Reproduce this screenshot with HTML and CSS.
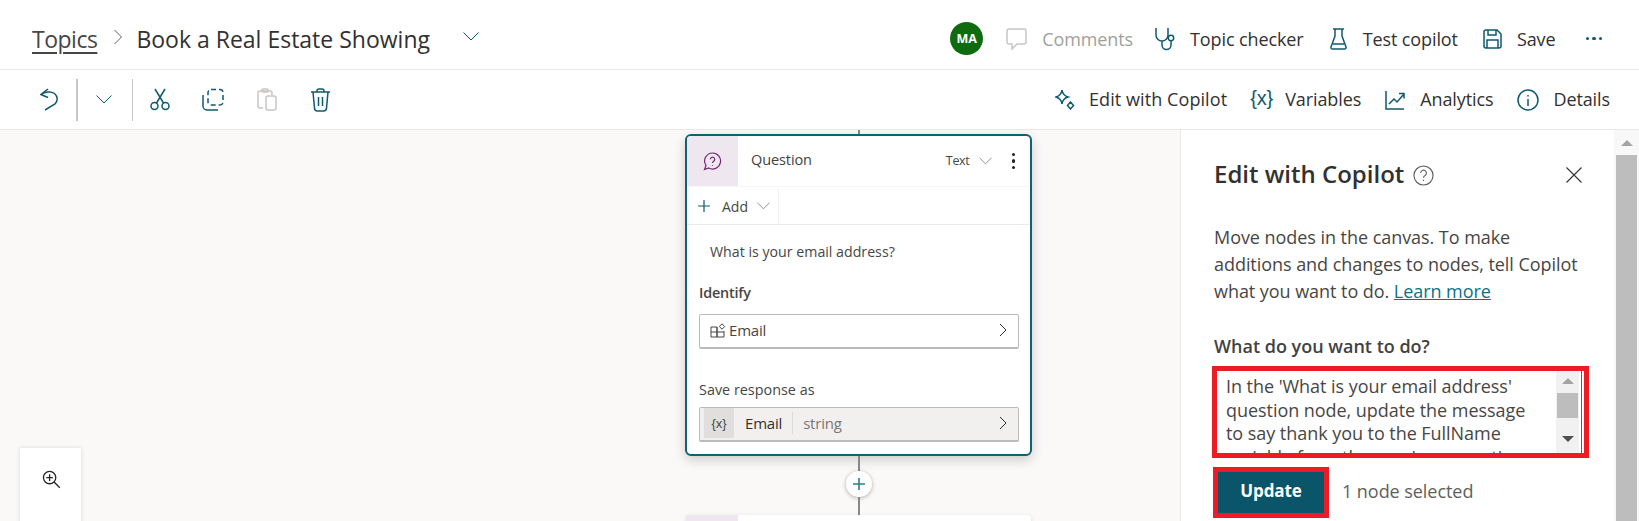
FILE: index.html
```html
<!DOCTYPE html>
<html lang="en">
<head>
<meta charset="utf-8">
<title>Book a Real Estate Showing</title>
<link rel="stylesheet" href="styles.css">
</head>
<body>
<header class="topbar">
  <nav class="crumbs">
    <a class="crumb-link">Topics</a>
    <svg class="crumb-sep" viewBox="0 0 10 16"><path d="M1.5 1l7 7-7 7"/></svg>
    <span class="crumb-title">Book a Real Estate Showing</span>
    <svg class="crumb-chev" viewBox="0 0 16 9"><path d="M.5.5L8 8 15.500.500"/></svg>
  </nav>
  <div class="actions">
    <span class="avatar">MA</span>
    <button class="act act-comments">
      <svg class="ico ico-off" width="21" height="22" viewBox="0 0 21 22"><path d="M3 1h15a2 2 0 0 1 2 2v11a2 2 0 0 1-2 2h-7l-5 5v-5H3a2 2 0 0 1-2-2V3a2 2 0 0 1 2-2z"/></svg>
      <span>Comments</span>
    </button>
    <button class="act act-check">
      <svg class="ico" width="22" height="24" viewBox="0 0 22 24"><path d="M1 1v7a6 6 0 0 0 12 0V1M7 14v4a4.500 4.500 0 0 0 9 0v-4"/><circle cx="16" cy="11" r="2.700"/></svg>
      <span>Topic checker</span>
    </button>
    <button class="act act-test">
      <svg class="ico" width="17" height="22" viewBox="0 0 17 22"><path d="M3 1h11M5 1v7L1 19a1.500 1.500 0 0 0 1.500 2h12a1.500 1.500 0 0 0 1.500-2L12 8V1M3 16h11"/></svg>
      <span>Test copilot</span>
    </button>
    <button class="act act-save">
      <svg class="ico" width="19" height="20" viewBox="0 0 19 20"><path d="M1 3a2 2 0 0 1 2-2h11l4 4v12a2 2 0 0 1-2 2H3a2 2 0 0 1-2-2zM5 1v5h8V1M4 19v-8h11v8"/></svg>
      <span>Save</span>
    </button>
    <span class="more"><i></i><i></i><i></i></span>
  </div>
</header>

<div class="toolbar">
  <div class="tools">
    <svg class="ico tool-undo" width="19" height="23" viewBox="0 0 19 23"><path d="M8 1L1 6.500l7 3M1 6.500C5 3.500 11 3 14.500 5.500c3.500 3 3.500 7.500.5 10.500L5 22"/></svg>
    <span class="vsep vsep-thick"></span>
    <svg class="ico tool-chev" width="16" height="9" viewBox="0 0 16 9"><path d="M.5.500L8 8 15.500.500"/></svg>
    <span class="vsep"></span>
    <svg class="ico tool-cut" width="20" height="23" viewBox="0 0 20 23"><circle cx="4.500" cy="18" r="3.500"/><circle cx="15.500" cy="18" r="3.500"/><path d="M6.500 15L15 1M13.500 15L5 1"/></svg>
    <svg class="ico tool-copy" width="22" height="23" viewBox="0 0 22 23"><path d="M1 7v11a4 4 0 0 0 4 4h11"/><rect x="6" y="1.500" width="15" height="15.500" rx="3" stroke-dasharray="5 3"/></svg>
    <svg class="ico ico-off tool-paste" width="20" height="23" viewBox="0 0 20 23"><path d="M6 20H3a2 2 0 0 1-2-2V5a2 2 0 0 1 2-2h10a2 2 0 0 1 2 2v2"/><rect x="5" y="1" width="6" height="3" rx="1"/><rect x="9" y="8" width="10" height="14" rx="2"/></svg>
    <svg class="ico tool-trash" width="21" height="24" viewBox="0 0 21 24"><path d="M1 4h19M7 4V3a2 2 0 0 1 2-2h3a2 2 0 0 1 2 2v1M3 4l1.500 16a3 3 0 0 0 3 3h6a3 3 0 0 0 3-3L18 4M8.500 9v9M12.500 9v9"/></svg>
  </div>
  <div class="tool-actions">
    <button class="act act-edit">
      <svg class="ico" width="20" height="21" viewBox="0 0 20 21"><path d="M7 1c.5 3.500 2.500 6 6 7-3.500 1-5.500 3.500-6 7-.5-3.500-2.500-6-6-7 3.500-1 5.500-3.500 6-7zM15.500 13l3 3.500-3 3.500-3-3.500z"/></svg>
      <span>Edit with Copilot</span>
    </button>
    <button class="act act-vars">
      <span class="brace">{x}</span>
      <span>Variables</span>
    </button>
    <button class="act act-analytics">
      <svg class="ico" width="20" height="20" viewBox="0 0 20 20"><path d="M1 1v18h18M4 14l5-5 3 3 7-8M14 3.500h5v5"/></svg>
      <span>Analytics</span>
    </button>
    <button class="act act-details">
      <svg class="ico" width="22" height="22" viewBox="0 0 22 22"><circle cx="11" cy="11" r="10"/><path d="M11 10v7M11 6v1.500"/></svg>
      <span>Details</span>
    </button>
  </div>
</div>

<main class="workspace">
  <section class="canvas">
    <div class="flow">
      <span class="link link-top"></span>
      <article class="node">
        <div class="node-head">
          <span class="node-icon">
            <svg width="19" height="19" viewBox="0 0 19 19"><path d="M9.500 1a8 8 0 1 1-3.800 15L1.500 17.500 3 13.500A8 8 0 0 1 9.500 1z"/><path d="M7.300 7.200a2.200 2.200 0 1 1 3.400 2c-.8.500-1.200.9-1.200 1.800M9.500 13v.8"/></svg>
          </span>
          <span class="node-name">Question</span>
          <span class="node-type">Text</span>
          <svg class="chev-sm" viewBox="0 0 14 8"><path d="M.5.500L7 7 13.500.500"/></svg>
          <span class="kebab"><i></i><i></i><i></i></span>
        </div>
        <div class="node-add">
          <div class="add-btn">
            <svg class="plus-sm" viewBox="0 0 12 12"><path d="M6 0v12M0 6h12"/></svg>
            <span>Add</span>
            <svg class="chev-sm" viewBox="0 0 14 8"><path d="M.5.500L7 7 13.500.500"/></svg>
          </div>
        </div>
        <p class="node-msg">What is your email address?</p>
        <div class="node-label label-identify">Identify</div>
        <div class="picker">
          <svg class="entity" viewBox="0 0 16 15"><path d="M1 4h6v10H1zM1 9h13M7 4v10h7V8"/><path d="M12 .8l2.700 2.700-2.700 2.700-2.700-2.700z"/></svg>
          <span>Email</span>
          <svg class="chev-r" viewBox="0 0 8 14"><path d="M1 1l6 6-6 6"/></svg>
        </div>
        <div class="node-label label-save">Save response as</div>
        <div class="picker picker-var">
          <span class="var-tag">{x}</span>
          <span class="var-name">Email</span>
          <span class="var-type">string</span>
          <svg class="chev-r" viewBox="0 0 8 14"><path d="M1 1l6 6-6 6"/></svg>
        </div>
      </article>
      <span class="link link-mid"></span>
      <button class="add-node"><svg viewBox="0 0 12 12"><path d="M6 0v12M0 6h12"/></svg></button>
      <span class="link link-low"></span>
      <div class="node-next"><span class="node-next-icon"></span></div>
    </div>
    <div class="zoom-box">
      <svg width="19" height="19" viewBox="0 0 20 20"><circle cx="8" cy="8" r="6.500"/><path d="M8 4.500v7M4.500 8h7M12.700 12.700l6 6"/></svg>
    </div>
  </section>

  <aside class="panel">
    <div class="panel-head">
      <h2>Edit with Copilot</h2>
      <svg class="help" viewBox="0 0 22 22"><circle cx="11" cy="11" r="10"/><path d="M8 8.500a3 3 0 1 1 4.600 2.500c-1 .6-1.600 1.200-1.600 2.300M11 15.500v1.200"/></svg>
      <svg class="close" viewBox="0 0 16 16"><path d="M.5.500l15 15M15.500.500l-15 15"/></svg>
    </div>
    <p class="panel-text">Move nodes in the canvas. To make<br>additions and changes to nodes, tell Copilot<br>what you want to do. <a class="learn">Learn more</a></p>
    <div class="prompt-label">What do you want to do?</div>
    <div class="prompt">
      <div class="prompt-text">In the 'What is your email address'<br>question node, update the message<br>to say thank you to the FullName<br>variable from the previous question</div>
      <div class="mini-scroll">
        <span class="arrow-up"></span>
        <span class="mini-thumb"></span>
        <span class="arrow-down"></span>
      </div>
    </div>
    <div class="submit-row">
      <div class="submit-outline"><button class="submit">Update</button></div>
      <span class="selected">1 node selected</span>
    </div>
  </aside>

  <div class="page-scroll">
    <span class="page-arrow"></span>
    <span class="page-thumb"></span>
  </div>
</main>
</body>
</html>
```

FILE: styles.css
```css
* { box-sizing: border-box; }
html, body { margin: 0; height: 521px; overflow: hidden; }
body { font-family: "Open Sans", "Noto Sans", "Liberation Sans", sans-serif; color: #323130; background: #fff; }
button { font: inherit; color: inherit; border: 0; background: none; padding: 0; }
p, h2 { margin: 0; }
svg { display: block; flex: none; fill: none; }

.ico { stroke: #0f5a6e; stroke-width: 1.500; }
.ico-off { stroke: #c8c6c4; }

.topbar { height: 70px; display: flex; align-items: center; border-bottom: 1px solid #e9e8e7; padding: 8px 37px 0 32px; }
.crumbs { display: flex; align-items: center; }
.crumb-link { font-size: 23px; letter-spacing: -.5px; text-decoration: underline; text-underline-offset: 4px; text-decoration-thickness: 1.500px; color: #484644; }
.crumb-sep { width: 10px; height: 16px; margin: -4px 0 0 16px; }
.crumb-sep path { stroke: #605e5c; stroke-width: 1; }
.crumb-title { font-size: 23px; margin-left: 13px; }
.crumb-chev { width: 16px; height: 9px; margin: -4px 0 0 33px; }
.crumb-chev path { stroke: #0f5a6e; stroke-width: 1; }

.actions, .tool-actions { margin-left: auto; display: flex; align-items: center; }
.act { display: flex; align-items: center; font-size: 18px; letter-spacing: -.1px; white-space: nowrap; }
.tool-actions .act span { margin-top: -2px; }
.avatar { width: 33px; height: 33px; border-radius: 50%; background: #0f6b0f; color: #fff; font-size: 12.500px; font-weight: 700; display: flex; align-items: center; justify-content: center; margin-right: 23px; }
.act-comments { gap: 15px; color: #a19f9d; margin-right: 22px; }
.act-check { gap: 13px; margin-right: 26px; }
.act-test { gap: 16px; margin-right: 25px; }
.act-save { gap: 15px; margin-right: 30px; }
.more { display: flex; gap: 3px; }
.more i { width: 3.500px; height: 3.500px; border-radius: 50%; background: #0f5a6e; }

.toolbar { height: 60px; display: flex; align-items: center; border-bottom: 1px solid #e9e8e7; padding: 0 29px 0 40px; }
.tools { display: flex; align-items: center; }
.vsep { width: 1px; height: 42px; background: #c8c6c4; }
.vsep-thick { width: 2px; margin-left: 17px; }
.tool-chev { margin: 0 20px 0 18px; stroke-width: 1; }
.tool-cut { margin-left: 17px; }
.tool-copy { margin-left: 32px; }
.tool-paste { margin-left: 33px; }
.tool-trash { margin-left: 33px; }
.act-edit { gap: 14px; margin-right: 23px; letter-spacing: .08px; }
.act-vars { gap: 12px; margin-right: 24px; }
.act-analytics { gap: 15px; margin-right: 24px; }
.act-details { gap: 14px; }
.brace { font-size: 20px; color: #0f5a6e; font-family: "Liberation Sans", sans-serif; }

.workspace { height: 391px; display: flex; overflow: hidden; }
.canvas { width: 1180px; position: relative; background: #faf9f8; overflow: hidden; flex: none; }
.flow { width: 347px; margin-left: 685px; display: flex; flex-direction: column; align-items: center; }
.link { width: 2px; background: #8a8886; flex: none; }
.link-top { height: 4px; }
.link-mid { height: 15px; }
.link-low { height: 18px; }

.node { width: 347px; height: 322px; flex: none; background: #fff; border: 2px solid #0f6173; border-radius: 6px; box-shadow: 0 4px 12px rgba(0,0,0,.18); overflow: hidden; }
.node-head { height: 51px; display: flex; align-items: center; border-bottom: 1px solid #f6f5f4; padding-right: 15px; }
.node-icon { width: 51px; height: 50px; background: #efe7ef; display: flex; align-items: center; justify-content: center; }
.node-icon path { stroke: #742774; stroke-width: 1.200; }
.node-name { margin: -3px 0 0 13px; font-size: 14.500px; font-weight: 500; letter-spacing: -.1px; color: #424242; }
.node-type { margin: -1px 0 0 auto; font-size: 12.500px; letter-spacing: -.3px; color: #484644; }
.chev-sm { width: 13px; height: 8px; }
.chev-sm path { stroke: #8a8886; stroke-width: 1; }
.node-head .chev-sm { margin-left: 9px; }
.kebab { display: flex; flex-direction: column; gap: 3px; margin-left: 20px; }
.kebab i { width: 3.500px; height: 3.500px; border-radius: 50%; background: #252423; }
.node-add { height: 38px; border-bottom: 1px solid #edebe9; display: flex; }
.add-btn { width: 92px; height: 36px; display: flex; align-items: center; padding-left: 11px; border-right: 1px solid #f3f2f1; font-size: 14px; color: #484644; margin-top: 1px; }
.plus-sm { width: 12px; height: 12px; margin-right: 12px; }
.plus-sm path { stroke: #0f5a6e; stroke-width: 1.200; }
.add-btn .chev-sm { margin-left: 9px; }
.node-msg { margin: 17px 0 0 23px; font-size: 14.200px; line-height: 20px; color: #484644; }
.node-label { margin-left: 12px; font-size: 14.400px; line-height: 20px; color: #484644; }
.label-identify { margin-top: 21px; font-weight: 600; letter-spacing: -.2px; }
.label-save { margin-top: 31px; }
.picker { margin: 11px 0 0 12px; width: 320px; height: 35px; border: 1px solid #bdbbb9; border-bottom-width: 2px; border-radius: 2px; display: flex; align-items: center; padding: 0 11px 2px 10px; font-size: 15px; color: #484644; letter-spacing: -.2px; }
.entity { width: 16px; height: 15px; margin-right: 3px; }
.entity path { stroke: #484644; stroke-width: 1; }
.chev-r { width: 8px; height: 14px; margin-left: auto; }
.chev-r path { stroke: #323130; stroke-width: 1; }
.picker-var { margin-top: 7px; background: #f1f0ef; padding-left: 4px; }
.var-tag { width: 30px; height: 30px; background: #e1dfdd; display: flex; align-items: center; justify-content: center; font-size: 13px; font-family: "Liberation Sans", sans-serif; letter-spacing: 0; }
.var-name { margin-left: 11px; padding-right: 10px; border-right: 1px solid #dcdad8; line-height: 22px; color: #323130; }
.var-type { margin-left: 10px; color: #797775; }

.add-node { width: 26px; height: 26px; border-radius: 50%; background: #fff; box-shadow: 0 1px 4px rgba(0,0,0,.3); display: flex; align-items: center; justify-content: center; flex: none; }
.add-node svg { width: 12px; height: 12px; }
.add-node path { stroke: #2a7f93; stroke-width: 1.600; }
.node-next { width: 345px; height: 40px; flex: none; background: #fff; border-radius: 4px 4px 0 0; box-shadow: 0 1px 4px rgba(0,0,0,.12); }
.node-next-icon { display: block; width: 52px; height: 40px; background: #efe7ef; }

.zoom-box { position: absolute; left: 20px; top: 318px; width: 61px; height: 90px; background: #fff; box-shadow: 0 0 4px rgba(0,0,0,.14); padding: 22px 0 0 22px; }
.zoom-box circle, .zoom-box path { stroke: #252423; stroke-width: 1.400; }

.panel { width: 434px; flex: none; background: #fff; border-left: 1px solid #edebe9; padding: 27px 0 0 33px; }
.panel-head { height: 36px; display: flex; align-items: center; }
.panel-head h2 { margin-top: -3px; font-size: 24px; font-weight: 600; color: #323130; white-space: nowrap; }
.help { width: 21px; height: 21px; margin-left: 9px; }
.help circle, .help path { stroke: #605e5c; stroke-width: 1.200; }
.close { width: 16px; height: 16px; margin-left: auto; margin-right: 32px; }
.close path { stroke: #323130; stroke-width: 1.100; }
.panel-text { margin-top: 31px; font-size: 18px; line-height: 27px; letter-spacing: -.05px; color: #484644; white-space: nowrap; }
.learn { color: #0f7085; text-decoration: underline; }
.prompt-label { margin-top: 30px; font-size: 18px; line-height: 22px; font-weight: 600; color: #424242; }
.prompt { margin: 9px 0 0 -2px; width: 377px; height: 92px; border: 5px solid #ed1c24; display: flex; overflow: hidden; background: #fff; }
.prompt::after { content: ""; width: 1px; margin-left: 2px; background: #605e5c; flex: none; }
.prompt-text { width: 339px; flex: none; padding: 4px 0 0 9px; font-size: 18px; line-height: 23.500px; letter-spacing: -.05px; color: #484644; white-space: nowrap; overflow: hidden; }
.mini-scroll { width: 23px; flex: none; background: #f1f1f1; display: flex; flex-direction: column; align-items: center; padding-top: 7px; }
.arrow-up { border: 6px solid transparent; border-top: 0; border-bottom: 6px solid #a3a3a3; }
.mini-thumb { width: 21px; height: 25px; background: #bdbdbd; margin-top: 9px; }
.arrow-down { border: 6px solid transparent; border-bottom: 0; border-top: 6px solid #505050; margin-top: 18px; }
.submit-row { margin-top: 9px; display: flex; align-items: center; }
.submit-outline { margin-left: -1px; width: 116px; height: 51px; border: 5px solid #ed1c24; }
.submit { width: 100%; height: 100%; background: #0b556a; color: #fff; font-size: 17px; font-weight: 700; letter-spacing: -.1px; padding-bottom: 4px; }
.selected { margin: -4px 0 0 13px; font-size: 18px; letter-spacing: -.05px; color: #605e5c; }

.page-scroll { flex: 1; background: #f8f8f8; display: flex; flex-direction: column; align-items: center; padding-top: 10px; }
.page-arrow { border: 6px solid transparent; border-top: 0; border-bottom: 6px solid #a3a3a3; }
.page-thumb { width: 21px; flex: 1; margin-top: 9px; background: #bdbdbd; }
```
